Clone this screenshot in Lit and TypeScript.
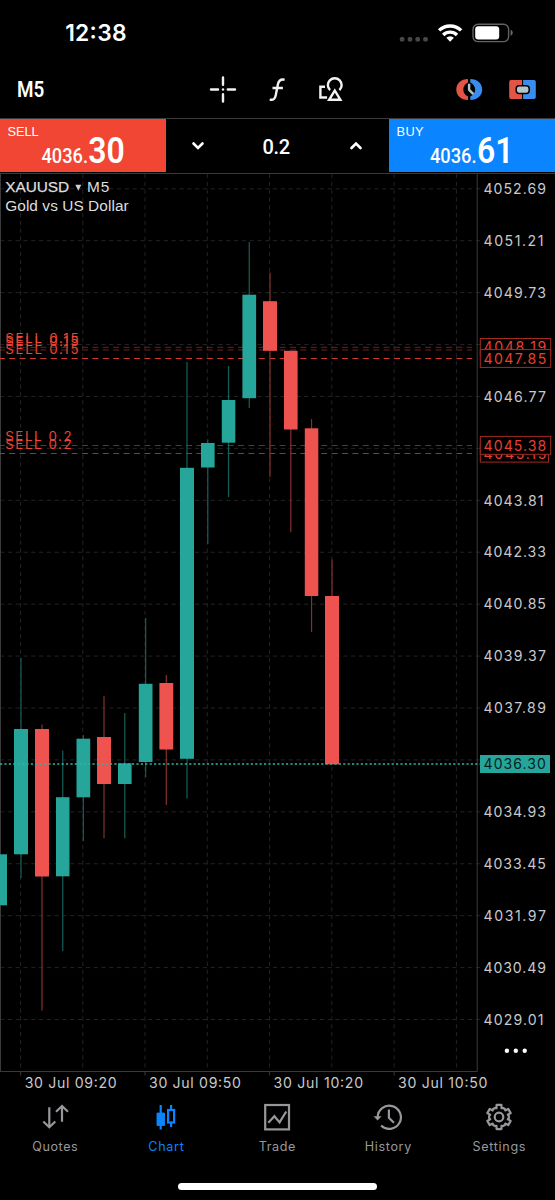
import { LitElement, html, svg, css } from "lit";
import { customElement } from "lit/decorators.js";

type Candle = [x: number, w: number, high: number, top: number, bottom: number, low: number, up: boolean];

const CANDLES: Candle[] = [
  [0, 7, 854.3, 854.3, 905.3, 905.3, true],
  [14, 14, 658, 729, 854.3, 878, true],
  [35, 14, 724.5, 729, 876.5, 1010.5, false],
  [56, 13.5, 750.5, 797.2, 876.3, 951, true],
  [76.5, 13.7, 735, 738.7, 797.3, 841, true],
  [97, 14, 696, 737, 784, 838.3, false],
  [118, 13.6, 713, 763.3, 784, 838.3, true],
  [138.8, 13.7, 618, 683.8, 762, 777, true],
  [159.4, 13.8, 675, 683, 749.5, 805, false],
  [180, 14, 362, 467.8, 758.8, 798.5, true],
  [201, 13.6, 439.5, 443, 467.5, 544, true],
  [221.8, 13.5, 366, 400, 442.7, 497, true],
  [242.4, 13.7, 242, 294.7, 398.2, 408, true],
  [263, 14, 272.5, 301.2, 350.8, 477, false],
  [284, 13.6, 350.8, 350.8, 429.5, 532, false],
  [304.8, 13.5, 419, 428.3, 596, 632, false],
  [325, 14, 559.5, 596, 764.3, 764.3, false],
];

const VLINES = [20.6, 82.8, 145, 207.3, 269.6, 331.8, 394.1, 456.4];
const LEVELS = Array.from({ length: 17 }, (_, i) => ({
  y: 188.8 + i * 51.92,
  label: (4052.69 - i * 1.48).toFixed(2),
}));
const COVERED = new Set(["4048.25", "4045.29", "4036.41"]);
const TIMES: [number, string, number][] = [
  [25.5, "30 Jul 09:20", 92],
  [149.8, "30 Jul 09:50", 92],
  [274.3, "30 Jul 10:20", 89.6],
  [398.8, "30 Jul 10:50", 89.4],
];
const ORDERS: [number, string, number, number][] = [
  [347.3, "SELL 0.15", 72, 0.5],
  [350, "SELL 0.15", 72, 0.5],
  [358.5, "SELL 0.15", 72, 0.95],
  [445.5, "SELL 0.2", 65, 0.6],
  [453.5, "SELL 0.2", 65, 0.75],
];

@customElement("price-chart")
class PriceChart extends LitElement {
  static styles = css`
    :host { display: block; height: 921px; }
    svg { display: block; }
    text { font-family: Inter, "Liberation Sans", sans-serif; font-size: 14px; }
    .grid { stroke: #232328; stroke-width: 1; stroke-dasharray: 4.2 3.6; }
    .frame { stroke: #3a3a3c; stroke-width: 1; fill: none; }
    .axis { fill: #c9c9cb; font-size: 14.1px; }
    .up { fill: #26a69a; }
    .down { fill: #ef5350; }
    .wick-up { fill: #165f58; }
    .wick-down { fill: #84302f; }
    .order { stroke: #e03c32; stroke-width: 1; stroke-dasharray: 6 4.4; stroke-dashoffset: 1.2; }
    .order-text { fill: #ee4434; font-size: 13.3px; }
    .tag { fill: #000; stroke: #a52a20; stroke-width: 1; }
    .tag-text { fill: #e8402f; font-size: 14.1px; }
    .bid { stroke: #2fb3a6; stroke-width: 1.5; stroke-dasharray: 2.2 2.2; }
    .title { fill: #dededf; font-family: "Liberation Sans", Arial, sans-serif; font-size: 15.4px; }
    .strong { stroke: #dededf; stroke-width: 0.25; }
  `;

  private tag(x: number, y: number, w: number, h: number, label: string, ty: number) {
    return svg`<rect class="tag" x=${x} y=${y} width=${w} height=${h}></rect>
      <text class="tag-text" x="483.5" y=${ty} textLength="62.8">${label}</text>`;
  }

  render() {
    return html`<svg width="555" height="921" viewBox="0 173 555 921">
      ${VLINES.map((x) => svg`<line class="grid" x1=${x} x2=${x} y1="174" y2="1071"></line>`)}
      ${LEVELS.map((l) => svg`<line class="grid" x1="0" x2="480" y1=${l.y} y2=${l.y}></line>`)}
      <path class="frame" d="M0 173.5H555M0.5 173V1071.5M0 1071.5H477.2V173"></path>
      ${VLINES.filter((_, i) => i % 2 === 0).map((x) => svg`<path class="frame" d="M${x} 1071V1075.5"></path>`)}
      ${ORDERS.map(([y, , , o]) => svg`<line class="order" x1="0" x2="472" y1=${y} y2=${y} opacity=${o}></line>`)}
      ${CANDLES.map(
        ([x, w, high, top, bottom, low, up]) => svg`
          <rect class=${up ? "wick-up" : "wick-down"} x=${x + w / 2 - 0.6} y=${high} width="1.2" height=${low - high}></rect>
          <rect class=${up ? "up" : "down"} x=${x} y=${top} width=${w} height=${bottom - top}></rect>`
      )}
      <line class="bid" x1="0" x2="480" y1="763.9" y2="763.9"></line>
      ${ORDERS.map(([y, label, len]) => svg`<text class="order-text" x="5.2" y=${y - 4.1} textLength=${len + 1.4}>${label}</text>`)}
      ${LEVELS.filter((l) => !COVERED.has(l.label)).map(
        (l) => svg`<text class="axis" x="483.5" y=${l.y + 5.2} textLength=${l.label.endsWith("1") ? 60 : 62.4}>${l.label}</text>`
      )}
      ${this.tag(480.3, 338.5, 70.4, 17, "4048.19", 352)}
      ${this.tag(480.3, 349.6, 70.4, 17.8, "4047.85", 364)}
      ${this.tag(480.3, 444.5, 68.2, 17.6, "4045.15", 458.8)}
      ${this.tag(480.3, 436.4, 70.4, 17.9, "4045.38", 450.7)}
      <rect class="up" x="480" y="755" width="70" height="18"></rect>
      <text x="483.6" y="769.2" fill="#04211f" textLength="62.3">4036.30</text>
      ${TIMES.map(([x, label, len]) => svg`<text class="axis" x=${x - 0.8} y="1087.6" textLength=${len}>${label}</text>`)}
      <text class="title strong" x="5.2" y="192.4" textLength="64">XAUUSD</text>
      <path d="M75.3 184.8h6l-3 5.9z" fill="#d0d0d2"></path>
      <text class="title" x="87" y="192.4" textLength="22.4">M5</text>
      <text class="title" x="5.2" y="211.3" textLength="123.5">Gold vs US Dollar</text>
      <g fill="#fff"><circle cx="506.9" cy="1050.8" r="2.2"></circle><circle cx="515.8" cy="1050.8" r="2.2"></circle><circle cx="524.7" cy="1050.8" r="2.2"></circle></g>
    </svg>`;
  }
}

const gear = () => {
  const pts: string[] = [];
  const tooth = [[-0.42, 9.9], [-0.28, 9.1], [-0.2, 12.3], [0.2, 12.3], [0.28, 9.1], [0.42, 9.9]];
  for (let i = 0; i < 6; i++) {
    const a = (i * 60 - 90) * (Math.PI / 180);
    for (const [off, r] of tooth) {
      pts.push(`${(15 + Math.cos(a + off) * r).toFixed(2)} ${(15 + Math.sin(a + off) * r).toFixed(2)}`);
    }
  }
  return `M${pts.join("L")}Z`;
};

const TABS = [
  {
    label: "Quotes", width: 45.5,
    icon: svg`<path d="M9.3 5.2V25M3.3 19.5l6 5.8 6-5.8M22 19.7V4.2M16 9.8l6-5.8 6 5.8"></path>`,
  },
  {
    label: "Chart", width: 35.5,
    icon: svg`<path d="M9.7 3V27.500M20.1 3v4.5M20.1 21v4"></path><rect x="5.9" y="11" width="7.600" height="12.500" fill="currentColor" stroke="none"></rect><rect x="17.1" y="8" width="6" height="12.5"></rect><path d="M6 11h7.500v12.500h-7.500z" fill="currentColor" stroke-width="0.800"></path>`,
  },
  {
    label: "Trade", width: 36.5,
    icon: svg`<rect x="3.2" y="3" width="23.8" height="24.400"></rect><path d="M6.3 20.8l6.1-6.6 5.2 6.2L24.2 9.500"></path>`,
  },
  {
    label: "History", width: 46.5,
    icon: svg`<path d="M4.7 15.4A11.6 11.6 0 1 1 8.1 23.5"></path><path d="M0.600 14.200h8l-4 4.400z" fill="currentColor" stroke="none"></path><path d="M15.9 7.6v8.2l5 5"></path>`,
  },
  {
    label: "Settings", width: 53,
    icon: svg`<path d=${gear()} stroke-linejoin="round"></path><circle cx="15" cy="15" r="4.3"></circle>`,
  },
];

@customElement("app-root")
class AppRoot extends LitElement {
  static styles = css`
    :host { display: block; width: 555px; height: 1200px; background: #000; color: #fff; overflow: hidden; font-family: Inter, "Liberation Sans", sans-serif; }
    * { box-sizing: border-box; }
    svg { display: block; flex: none; }
    .status { height: 66px; display: flex; justify-content: space-between; padding: 0 42px 0 65px; align-items: center; }
    .tools { height: 52px; display: grid; grid-template-columns: 196px 165px 1fr; align-items: start; }
    .trade { height: 54px; margin-bottom: 1px; display: grid; grid-template-columns: 166px 223px 166px; border-top: 1px solid #3a3a3c; }
    .side { display: block; height: 53px; }
    .sell { background: #f04633; }
    .buy { background: #0a84ff; }
    .side text { fill: #fff; }
    .cap { font-family: "Liberation Sans", Arial, sans-serif; font-size: 12.8px; }
    .price { font-family: Roboto, sans-serif; font-size: 20.3px; font-weight: 500; }
    .big { font-family: Roboto, sans-serif; font-size: 36.5px; font-weight: 600; }
    .din { font-family: Roboto, sans-serif; font-weight: 500; fill: #fff; }
    .volume { display: flex; justify-content: space-between; align-items: center; padding: 0 25px 0 24px; }
    .tabs { height: 84px; display: grid; grid-template-columns: repeat(5, 111px); padding-top: 8px; margin-left: -1px; }
    .tab { display: flex; flex-direction: column; align-items: center; color: #98989c; gap: 6px; }
    .tab.active { color: #0a84ff; }
    .tab .icon { fill: none; stroke: currentColor; stroke-width: 2.2; }
    .tab text { fill: currentColor; font-size: 12.6px; }
    .home { width: 199px; height: 7px; border-radius: 4px; background: #fff; margin: 4.5px auto 0; }
  `;

  render() {
    return html`
      <header class="status">
        <svg width="64" height="66"><text x="0.2" y="41.4" fill="#fff" font-size="22.8" font-weight="600" textLength="61.3">12:38</text></svg>
        <svg width="120" height="66" viewBox="393 0 120 66">
          <g fill="#48484a">
            <rect x="399.8" y="37" width="4.6" height="4.6" rx="1.6"></rect><rect x="407.7" y="37" width="4.6" height="4.6" rx="1.6"></rect>
            <rect x="415.4" y="37" width="4.6" height="4.6" rx="1.6"></rect><rect x="423.2" y="37" width="4.6" height="4.6" rx="1.6"></rect>
          </g>
          <g fill="none" stroke="#fff" stroke-width="3.4">
            <path d="M439.1 30.4a15.8 15.8 0 0 1 22 0"></path>
            <path d="M443.2 34.9a10 10 0 0 1 13.8 0"></path>
          </g>
          <path d="M450.1 41.7l-3.8-3.9a5.4 5.4 0 0 1 7.6 0z" fill="#fff"></path>
          <rect x="473" y="24.2" width="35.6" height="17.4" rx="5" fill="none" stroke="#626265" stroke-width="1.4"></rect>
          <rect x="475.2" y="26.3" width="24" height="13.2" rx="3" fill="#fff"></rect>
          <path d="M510.6 29.8c2.8 1 2.8 5 0 6z" fill="#68686b"></path>
        </svg>
      </header>
      <nav class="tools">
        <svg width="196" height="52" viewBox="0 66 196 52"><text class="din" x="17" y="96.8" font-size="22.3" style="font-weight:600" textLength="27.3" lengthAdjust="spacingAndGlyphs">M5</text></svg>
        <svg width="165" height="52" viewBox="196 66 165 52" fill="none" stroke="#f2f2f3" stroke-width="2.4">
          <path d="M211 89.5H218M227.8 89.5H235M223 77.500v7.2M223 94.3V101.500" stroke-linecap="round" stroke-width="2.4"></path>
          <circle cx="223" cy="89.5" r="1.2" fill="#f2f2f3" stroke="none"></circle>
          <path d="M284.6 79.7c-3.8-.7-5.9.6-6.7 4.6l-2.1 10.6c-.8 4.2-2.5 5.5-6.1 4.7M272.5 88h10.4" stroke-width="2.4"></path>
          <path d="M330.1 90.2A6.9 6.9 0 1 1 339.4 90.2"></path>
          <path d="M334.8 90.5l5.6 9.3h-11.3z" stroke-width="2.4"></path>
          <path d="M325 86.8h-4.6v10.7h6.7" stroke-width="2.4"></path>
        </svg>
        <svg width="194" height="52" viewBox="361 66 194 52">
          <path d="M468 79.1C461 79.1 456.3 83.6 456.3 89.5S461 100 468 100v-3.4c-3-1.5-4.7-4-4.7-7.1s1.7-5.6 4.7-7.1z" fill="#e25446"></path>
          <path d="M470.3 79.1c7 0 11.9 4.5 11.9 10.4S477.3 100 470.3 100v-3.4c3-1.5 4.9-4 4.9-7.1s-1.9-5.6-4.9-7.1z" fill="#3b8cef"></path>
          <path d="M469.1 83.8v6l4.3 4.4" fill="none" stroke="#b6c4cc" stroke-width="2.4"></path>
          <path d="M522 80h-11a1.8 1.8 0 0 0-1.8 1.8v15.4A1.8 1.8 0 0 0 511 99h11z" fill="#e25446"></path>
          <path d="M523.1 80h10.900a1.8 1.8 0 0 1 1.8 1.8v15.4A1.8 1.8 0 0 1 534 99h-10.9z" fill="#3b8cef"></path>
          <rect x="516.2" y="85.7" width="13" height="7.9" rx="3" fill="#b6c4cc" stroke="#000" stroke-width="1.5"></rect>
        </svg>
      </nav>
      <section class="trade">
        <svg class="side sell" width="166" height="53" viewBox="0 119 166 53">
          <text class="cap" x="7.6" y="135.8" textLength="31">SELL</text>
          <text class="price" x="41.5" y="163.1" textLength="46.5" lengthAdjust="spacingAndGlyphs">4036.</text>
          <text class="big" x="88.3" y="163.3" textLength="36.500" lengthAdjust="spacingAndGlyphs">30</text>
        </svg>
        <div class="volume">
          <svg width="16" height="30" fill="none" stroke="#fff" stroke-width="2.6" stroke-linecap="round"><path d="M3.5 12.5l4.500 4.400 4.500-4.400"></path></svg>
          <svg width="30" height="50"><text class="din" x="0.5" y="32.8" font-size="20" textLength="27.5">0.2</text></svg>
          <svg width="16" height="30" fill="none" stroke="#fff" stroke-width="2.6" stroke-linecap="round"><path d="M3.5 17l4.5-4.400 4.500 4.400"></path></svg>
        </div>
        <svg class="side buy" width="166" height="53" viewBox="389 119 166 53">
          <text class="cap" x="396.6" y="135.8" textLength="27">BUY</text>
          <text class="price" x="430" y="163.1" textLength="46.5" lengthAdjust="spacingAndGlyphs">4036.</text>
          <text class="big" x="477" y="163.3" textLength="36.5" lengthAdjust="spacingAndGlyphs">61</text>
        </svg>
      </section>
      <price-chart></price-chart>
      <nav class="tabs">
        ${TABS.map(
          (t) => html`<div class="tab ${t.label === "Chart" ? "active" : ""}">
            <svg class="icon" width="30" height="30">${t.icon}</svg>
            <svg width="60" height="20"><text x=${30 - t.width / 2} y="12.8" textLength=${t.width}>${t.label}</text></svg>
          </div>`
        )}
      </nav>
      <div class="home"></div>
    `;
  }
}
